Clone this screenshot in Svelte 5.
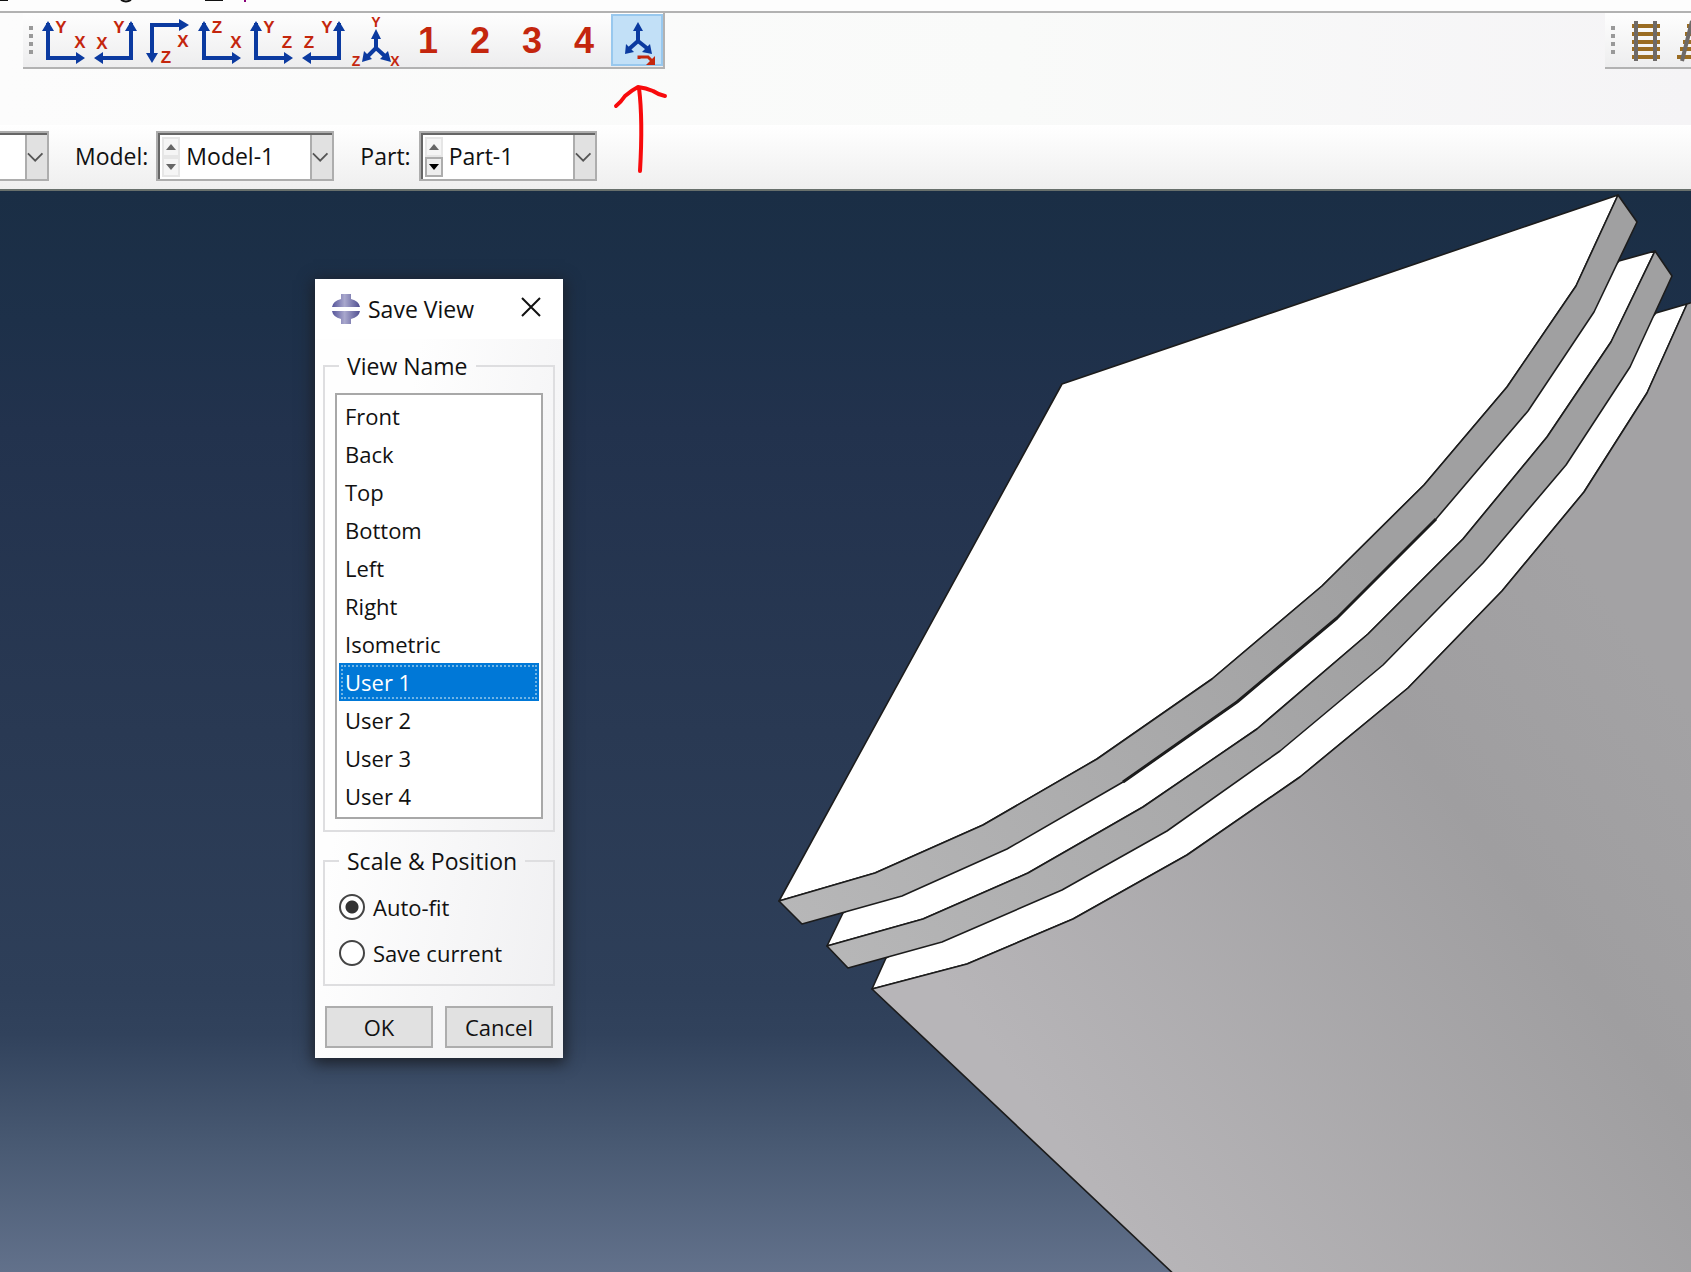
<script>
  const views = ['Front', 'Back', 'Top', 'Bottom', 'Left', 'Right', 'Isometric', 'User 1', 'User 2', 'User 3', 'User 4'];
  let selected = $state('User 1');
  let scale = $state('auto');

  // Axis icons: arrow path and the two letters with their positions
  const axes = [
    { name: 'Front view', dir: 'right', letters: [['Y', 19, 18], ['X', 38, 33]] },
    { name: 'Back view', dir: 'left', letters: [['Y', 25, 18], ['X', 8, 34]] },
    { name: 'Top view', dir: 'down', letters: [['X', 37, 32], ['Z', 20, 48]] },
    { name: 'Bottom view', dir: 'right', letters: [['Z', 19, 18], ['X', 38, 33]] },
    { name: 'Left view', dir: 'right', letters: [['Y', 19, 18], ['Z', 37, 33]] },
    { name: 'Right view', dir: 'left', letters: [['Y', 25, 18], ['Z', 7, 33]] }
  ];
  const shapes = {
    right: { line: 'M6 8V43H36', heads: 'M6 6L12 16H0ZM43 43L34 37V49Z' },
    left: { line: 'M37 8V43H6', heads: 'M37 6L43 16H31ZM0 43L9 37V49Z' },
    down: { line: 'M6 42V10H36', heads: 'M6 48L0 38H12ZM43 10L33 4V16Z' }
  };
  const combos = [
    { label: 'Model:', value: 'Model-1', active: false },
    { label: 'Part:', value: 'Part-1', active: true }
  ];
</script>

{#snippet chevron()}
  <svg class="chevron" viewBox="0 0 22 44" aria-hidden="true"><path d="M1 18L9 26L17 18" /></svg>
{/snippet}

<div class="app">
  <div class="menubar" aria-hidden="true">
    <svg viewBox="0 0 260 11"><path d="M0 0H8M205 0H223" /><path d="M121 0Q126 3 131 0" /><path class="tail" d="M245 0V2" /></svg>
  </div>

  <header class="toolbars">
    <div class="toolbar views">
      <span class="grip"><i></i><i></i><i></i><i></i></span>
      {#each axes as a}
        <button class="tool" aria-label={a.name}>
          <svg viewBox="0 0 46 50">
            <path class="axis" d={shapes[a.dir].line} />
            <path class="head" d={shapes[a.dir].heads} />
            {#each a.letters as [t, x, y]}
              <text {x} {y}>{t}</text>
            {/each}
          </svg>
        </button>
      {/each}
      <button class="tool" aria-label="Isometric view">
        <svg viewBox="0 0 46 50">
          <path class="axis" d="M22 18V34M22 33L12 43M22 33L33 43" />
          <path class="head" d="M22 14L27 24H17ZM8 47L10 36L18 44ZM37 47L26 44L34 36Z" />
          <text class="small" x="22" y="12">Y</text>
          <text class="small" x="2" y="51">Z</text>
          <text class="small" x="41" y="51">X</text>
        </svg>
      </button>
      {#each [1, 2, 3, 4] as n}
        <button class="tool number">{n}</button>
      {/each}
      <button class="tool save" aria-label="Save view">
        <svg viewBox="0 0 46 50">
          <path class="axis" d="M24 13V25M24 25L15 33M24 25L34 33" />
          <path class="head" d="M24 6L29 15H19ZM11 38L12 28L20 36ZM38 38L28 36L36 28Z" />
          <path class="swing" d="M25 43V41H34L38 45" />
          <path class="swinghead" d="M41 49H32L41 40Z" />
        </svg>
      </button>
    </div>

    <div class="toolbar tracks">
      <span class="grip"><i></i><i></i><i></i><i></i></span>
      <button class="tool" aria-label="Parallel projection">
        <svg viewBox="0 0 46 50">
          <path class="tie" d="M8 11H36M8 19H36M8 27H36M8 34H36M8 42H36" />
          <path class="rail" d="M12 6V46M31 6V46" />
        </svg>
      </button>
      <button class="tool" aria-label="Perspective projection">
        <svg viewBox="0 0 46 50">
          <path class="tie" d="M11 11H36M9 19H38M7 27H40M4 34H42M1 42H45" />
          <path class="rail" d="M16 6L6 46M31 6L41 46" />
        </svg>
      </button>
    </div>
  </header>

  <div class="context">
    <div class="combo cut">
      <select aria-label="Module"><option></option></select>
      {@render chevron()}
    </div>
    {#each combos as c}
      <label for={c.value}>{c.label}</label>
      <div class="combo">
        <span class="spin">
          <button aria-label="Previous"><svg viewBox="0 0 10 6"><path d="M0 6L5 0L10 6Z" /></svg></button>
          <button class:active={c.active} aria-label="Next"><svg viewBox="0 0 10 6"><path d="M0 0L5 6L10 0Z" /></svg></button>
        </span>
        <select id={c.value}><option>{c.value}</option></select>
        {@render chevron()}
      </div>
    {/each}
    <svg class="pointer" viewBox="0 0 60 96" aria-hidden="true">
      <path d="M6 26Q11 22 15 16Q22 10 28 7Q36 8 43 11Q49 15 55 16M29 8Q33 40 30 91" />
    </svg>
  </div>

  <main class="canvas">
    <svg class="model" viewBox="0 191 1691 1081" preserveAspectRatio="xMinYMin slice" aria-label="Part-1 model">
      <defs>
        <linearGradient id="band" gradientUnits="userSpaceOnUse" x1="790" y1="930" x2="1350" y2="540">
          <stop offset="0" stop-color="#b7b7b8" /><stop offset="1" stop-color="#a0a0a1" />
        </linearGradient>
        <linearGradient id="body" gradientUnits="userSpaceOnUse" x1="1090" y1="1180" x2="1700" y2="722">
          <stop offset="0" stop-color="#b7b5b8" /><stop offset=".68" stop-color="#9f9ea0" /><stop offset="1" stop-color="#a3a2a4" />
        </linearGradient>
      </defs>
      <g class="edges">
        <path class="face" d="M886 958L872 989L967 964L1073 919L1187 855L1300 777L1408 688L1502 591L1584 492L1647 393L1687 304L1656 313L1620 354L1556 451L1473 551L1375 650L1268 740L1155 819L1045 881L932 930Z" />
        <path fill="url(#body)" d="M872 989L967 964L1073 919L1187 855L1300 777L1408 688L1502 591L1584 492L1647 393L1687 304L1700 300V1280H1180Z" />
        <path class="face" d="M843 913L827 946L923 919L1028 873L1143 807L1257 729L1368 634L1463 539L1547 437L1611 342L1655 251L1619 261L1585 300L1518 399L1430 502L1330 602L1224 690L1110 770L995 837L888 884Z" />
        <path fill="url(#band)" d="M827 946L923 919L1028 873L1143 807L1257 729L1368 634L1463 539L1547 437L1611 342L1655 251L1672 276L1630 367L1566 465L1483 563L1383 665L1280 751L1167 831L1062 890L942 942L848 968Z" />
        <path class="face" d="M1062 384L1618 195L1576 286L1507 387L1424 485L1322 586L1212 679L1097 759L983 825L875 873L779 901Z" />
        <path fill="url(#band)" d="M779 901L875 873L983 825L1097 759L1212 679L1322 586L1424 485L1507 387L1576 286L1618 195L1637 222L1594 312L1528 411L1436 519L1337 618L1237 702L1123 782L1007 849L902 896L802 924Z" />
        <path class="heavy" d="M1436 519L1337 618L1237 702L1123 782" />
      </g>
    </svg>

    <section class="dialog" aria-label="Save View">
      <div class="title">
        <svg class="logo" viewBox="0 0 30 30" aria-hidden="true">
          <defs>
            <linearGradient id="metal"><stop offset="0" stop-color="#55549a" /><stop offset=".45" stop-color="#a9a8cd" /><stop offset="1" stop-color="#504f91" /></linearGradient>
          </defs>
          <path fill="url(#metal)" d="M10 0H20V5Q28 7 29 13H1Q2 7 10 5ZM1 17H29Q28 23 20 25V30H10V25Q2 23 1 17Z" />
        </svg>
        <h1>Save View</h1>
        <button class="close" aria-label="Close"><svg viewBox="0 0 20 20"><path d="M1 1L19 19M19 1L1 19" /></svg></button>
      </div>
      <form onsubmit={(e) => e.preventDefault()}>
        <fieldset class="names">
          <legend>View Name</legend>
          <select size="11" bind:value={selected} aria-label="View Name">
            {#each views as v}<option value={v}>{v}</option>{/each}
          </select>
        </fieldset>
        <fieldset class="scale">
          <legend>Scale &amp; Position</legend>
          <label><input type="radio" value="auto" bind:group={scale} />Auto-fit</label>
          <label><input type="radio" value="current" bind:group={scale} />Save current</label>
        </fieldset>
        <div class="actions">
          <button type="submit">OK</button>
          <button type="button">Cancel</button>
        </div>
      </form>
    </section>
  </main>
</div>

<style>
  :global(body) { margin: 0; }
  .app {
    display: flex;
    flex-direction: column;
    min-height: 100vh;
    overflow: hidden;
    background: #fbfbfb;
    color: #111;
    font: 23px/30px 'Open Sans', 'Noto Sans', sans-serif;
  }
  .app * { box-sizing: border-box; }
  button, select { font: inherit; color: inherit; margin: 0; border-radius: 0; }
  svg { display: block; }

  .menubar { height: 13px; border-bottom: 2px solid #b2b2b2; background: #fdfdfd; overflow: hidden; }
  .menubar svg { width: 260px; height: 11px; fill: none; stroke: #111; stroke-width: 2; }
  .menubar .tail { stroke: #807; }

  .toolbars { display: flex; justify-content: space-between; height: 112px; align-items: flex-start; background: linear-gradient(90deg, #fcfcfc, #f9faf9 60%, #f5f4f6); }
  .toolbar { display: flex; align-items: center; height: 56px; border-bottom: 2px solid #b2b2b2; background: linear-gradient(#fefefe, #ededee); }
  .views { margin-left: 23px; border-right: 2px solid #b2b2b2; }
  .tracks { width: 86px; overflow: hidden; }
  .grip { display: grid; gap: 4px; margin: 0 6px; flex: none; }
  .grip i { width: 4px; height: 4px; background: #999; }
  .tool { flex: none; width: 52px; height: 52px; padding: 0; border: 0; background: none; display: grid; place-items: center; }
  .tool svg { width: 46px; height: 50px; overflow: visible; }
  .axis { fill: none; stroke: #0b3aa0; stroke-width: 4; }
  .head { fill: #0b3aa0; }
  .tool text { font: 700 17px 'Liberation Sans', sans-serif; fill: #c4260d; text-anchor: middle; }
  .tool text.small { font-size: 14px; }
  .number { padding: 2px 2px 0 0; font: 700 36px 'Liberation Sans', sans-serif; color: #c4260d; }
  .save { border: 2px solid #98c8ee; background: #c2e0f7; }
  .swing { fill: none; stroke: #c4260d; stroke-width: 3; }
  .swinghead { fill: #c4260d; }
  .tie { stroke: #9a6c22; stroke-width: 4; }
  .rail { fill: none; stroke: #6e6a68; stroke-width: 4; }

  .context { position: relative; display: flex; align-items: center; height: 66px; padding-bottom: 2px; border-bottom: 2px solid #68706c; background: linear-gradient(#fff, #efefef); }
  .context label { margin: 0 8px 0 26px; }
  .combo { display: flex; width: 178px; height: 50px; border: 2px solid #adadad; background: #fff; box-shadow: inset 2px 2px #666; padding: 2px 0 0 2px; position: relative; }
  .combo.cut { width: 49px; padding-left: 0; border-left: 0; box-shadow: inset 0 2px #666; }
  .combo select { appearance: none; flex: 1; min-width: 0; border: 0; background: none; padding: 0 24px 2px 6px; outline: 0; }
  .chevron { position: absolute; right: 0; top: 2px; width: 22px; height: 44px; background: #e1e1e1; border-left: 2px solid #adadad; fill: none; stroke: #555; stroke-width: 2; pointer-events: none; }
  .spin { display: grid; grid-template-rows: 1fr 1fr; width: 18px; margin: 2px 0 2px 2px; }
  .spin button { display: grid; place-items: center; padding: 0; border: 2px solid #e6e6e6; background: #f5f5f5; }
  .spin button.active { border-color: #adadad; background: #eee; }
  .spin svg { width: 10px; height: 6px; fill: #666; }
  .spin .active svg { fill: #000; }
  .pointer { position: absolute; left: 610px; top: -45px; width: 60px; height: 96px; fill: none; stroke: #f80a0c; stroke-width: 4; stroke-linecap: round; stroke-linejoin: round; }

  .canvas { position: relative; flex: 1; min-height: 900px; background: linear-gradient(#1a2e45 0%, #1d3049 12%, #22324d 22%, #293953 50%, #2e3f59 74%, #31425c 78%, #485972 88%, #62718b 100%); }
  .model { position: absolute; inset: 0; width: 100%; height: 100%; }
  .edges { stroke: #1c1c1c; stroke-width: 1.6; stroke-linejoin: round; }
  .face { fill: #fff; }
  .heavy { fill: none; stroke-width: 3; }

  .dialog { position: absolute; left: 315px; top: 88px; width: 248px; background: linear-gradient(100deg, #fefefe 30%, #efeff1); box-shadow: 0 3px 14px 2px #1c2028; }
  .title { display: flex; align-items: center; height: 60px; padding: 0 22px 0 16px; background: #fff; }
  .logo { width: 30px; height: 30px; }
  h1 { flex: 1; margin: 0 0 0 7px; font-size: 23px; font-weight: 400; line-height: 30px; }
  .close { padding: 0 0 4px; border: 0; background: none; }
  .close svg { width: 20px; height: 20px; stroke: #111; stroke-width: 2; }
  form { padding: 12px 8px 10px; }
  fieldset { min-width: 0; margin: 0; border: 2px solid #dedee0; }
  legend { margin-left: 0; line-height: 30px; }
  .names { padding: 12px 10px 11px; }
  .names legend { margin-left: 4px; padding: 0 8px; }
  .names select { display: block; width: 100%; height: 426px; padding: 2px; border: 2px solid #a8a8a8; background: #fff; font-size: 22px; overflow: hidden; outline: 0; }
  .names option { height: 38px; padding: 4px 0 0 6px; color: #111; }
  .names option:checked { background: #0078d7 linear-gradient(#0078d7, #0078d7); color: #fff; outline: 2px dotted #6fb4e6; outline-offset: -4px; }
  .scale { margin-top: 14px; padding: 8px 14px; }
  .scale legend { padding: 0 8px; font-size: 23px; }
  .scale label { display: flex; align-items: center; gap: 8px; height: 46px; font-size: 22px; white-space: nowrap; }
  input { appearance: none; flex: none; width: 26px; height: 26px; margin: 0; border: 2px solid #444; border-radius: 50%; background: #fff; }
  input:checked { background: radial-gradient(circle, #333 6px, #fff 7px); }
  .actions { display: grid; grid-template-columns: 1fr 1fr; gap: 12px; margin: 20px 2px 0; }
  .actions button { height: 42px; padding: 0; border: 2px solid #adadad; background: #e1e1e1; font-size: 22px; line-height: 30px; }
</style>
